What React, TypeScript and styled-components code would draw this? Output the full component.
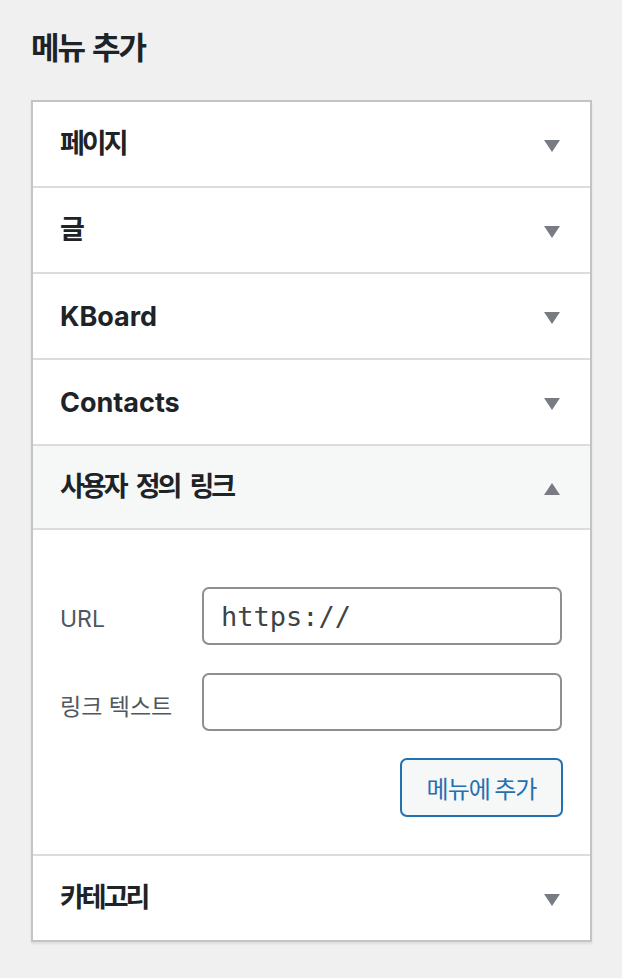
import React from "react";
import styled, { createGlobalStyle } from "styled-components";

const Global = createGlobalStyle`
  html, body { margin: 0; padding: 0; background: #f0f0f1; }
  body { font-family: Inter, "Noto Sans CJK KR", sans-serif; color: #1d2327; }
  * { box-sizing: border-box; }
`;

const Page = styled.div`
  padding: 26px 30px 30px 31px;
  display: flex;
  flex-direction: column;
  gap: 34px;
`;

const Title = styled.h2`
  margin: 0;
  font-family: "Noto Sans CJK KR", sans-serif;
  font-size: 31px;
  line-height: 40px;
  font-weight: 700;
  letter-spacing: -2px;
  word-spacing: 3px;
  color: #1d2327;
`;

const Panel = styled.div`
  width: 561px;
  background: #fff;
  border: 2px solid #c3c4c7;
  box-shadow: 0 2px 2px rgba(0, 0, 0, 0.08);
`;

const Section = styled.div`
  border-bottom: 2px solid #dcdcde;
  &:last-child { border-bottom: none; }
`;

const Header = styled.div<{ $open?: boolean }>`
  height: 84px;
  display: flex;
  align-items: center;
  justify-content: space-between;
  padding: 0 30px 0 27px;
  background: ${(p) => (p.$open ? "#f6f7f7" : "#fff")};
  border-bottom: ${(p) => (p.$open ? "2px solid #dcdcde" : "none")};
`;

const SectionTitle = styled.h3<{ $ko?: boolean }>`
  margin: 0 0 ${(p) => (p.$ko ? "5px" : "0")} 0;
  font-family: ${(p) => (p.$ko ? `"Noto Sans CJK KR", sans-serif` : `Inter, "Noto Sans CJK KR", sans-serif`)};
  font-size: 27px;
  font-weight: 700;
  letter-spacing: ${(p) => (p.$ko ? "-3px" : "0")};
  word-spacing: ${(p) => (p.$ko ? "7px" : "0")};
  color: #1d2327;
`;

const ArrowBox = styled.svg`
  margin-top: 4px;
  flex: none;
`;

const Arrow = ({ up }: { up?: boolean }) => (
  <ArrowBox width="16" height="12" viewBox="0 0 16 12">
    <polygon points={up ? "8,0 16,12 0,12" : "0,0 16,0 8,12"} fill="#787c82" />
  </ArrowBox>
);

const Content = styled.div`
  padding: 57px 28px 37px 27px;
  display: flex;
  flex-direction: column;
`;

const FieldRow = styled.div`
  display: grid;
  grid-template-columns: 142px 1fr;
  align-items: center;
  margin-bottom: 28px;
`;

const Label = styled.label`
  font-family: Inter, "Noto Sans CJK KR", sans-serif;
  font-size: 23px;
  color: #50575e;
  padding-top: 5px;
`;

const Input = styled.input`
  width: 100%;
  height: 58px;
  border: 2px solid #8c8f94;
  border-radius: 7px;
  padding: 0 17px;
  font-family: "DejaVu Sans Mono", monospace;
  font-size: 27px;
  color: #3c434a;
  background: #fff;
  outline: none;
`;

const Actions = styled.div`
  display: flex;
  justify-content: flex-end;
  margin-top: -1px;
  margin-right: -1px;
`;

const Button = styled.button`
  width: 163px;
  height: 59px;
  border: 2px solid #2271b1;
  border-radius: 7px;
  background: #f6f7f7;
  color: #2271b1;
  font-family: "Noto Sans CJK KR", sans-serif;
  font-size: 24px;
  letter-spacing: -1px;
  padding: 0;
  cursor: pointer;
`;

const sections: { title: string; ko: boolean }[] = [
  { title: "페이지", ko: true },
  { title: "글", ko: true },
  { title: "KBoard", ko: false },
  { title: "Contacts", ko: false },
];

export default function App() {
  return (
    <>
      <Global />
      <Page>
        <Title>메뉴 추가</Title>
        <Panel>
          {sections.map((s) => (
            <Section key={s.title}>
              <Header>
                <SectionTitle $ko={s.ko}>{s.title}</SectionTitle>
                <Arrow />
              </Header>
            </Section>
          ))}
          <Section>
            <Header $open>
              <SectionTitle $ko>사용자 정의 링크</SectionTitle>
              <Arrow up />
            </Header>
            <Content>
              <FieldRow>
                <Label>URL</Label>
                <Input defaultValue="https://" />
              </FieldRow>
              <FieldRow>
                <Label>링크 텍스트</Label>
                <Input defaultValue="" />
              </FieldRow>
              <Actions>
                <Button>메뉴에 추가</Button>
              </Actions>
            </Content>
          </Section>
          <Section>
            <Header>
              <SectionTitle $ko>카테고리</SectionTitle>
              <Arrow />
            </Header>
          </Section>
        </Panel>
      </Page>
    </>
  );
}
